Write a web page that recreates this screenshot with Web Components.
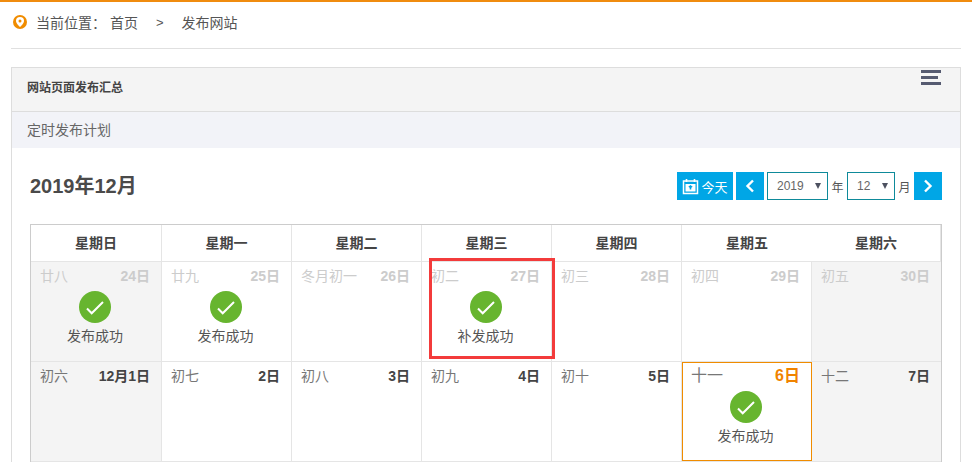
<!DOCTYPE html>
<html lang="zh">
<head>
<meta charset="utf-8">
<title>发布网站</title>
<style>
  html, body { margin: 0; height: 463px; overflow: hidden; background: #fff; }
  body { font: 14px "Liberation Sans", "Noto Sans CJK SC", sans-serif; color: #555; }
</style>
</head>
<body>
<app-page></app-page>

<script>
class BreadCrumb extends HTMLElement {
  connectedCallback() {
    this.attachShadow({ mode: 'open' });
    this.shadowRoot.innerHTML = `
      <style>
        :host { display: flex; align-items: center; height: 40px; margin: 0 11px; border-bottom: 1px solid #e0e0e0; padding: 0 2px 6px; color: #555; }
        svg { width: 14px; height: 16px; margin-right: 9px; }
        .sep { margin: 0 18px; font-size: 13px; }
        .home { margin-left: 4px; }
      </style>
      <svg viewBox="0 0 14 16"><circle cx="7" cy="8" r="7" fill="#f08c00"/><path d="M7 3a4 4 0 0 0-4 4c0 2.600 4 6 4 6s4-3.400 4-6a4 4 0 0 0-4-4z" fill="#fff"/><circle cx="7" cy="7" r="1.500" fill="#f08c00"/></svg>
      <span>当前位置：</span><span class="home">首页</span><span class="sep">&gt;</span><span>发布网站</span>
    `;
  }
}
customElements.define('bread-crumb', BreadCrumb);

class PanelBox extends HTMLElement {
  connectedCallback() {
    this.attachShadow({ mode: 'open' });
    this.shadowRoot.innerHTML = `
      <style>
        :host { display: block; margin: 18px 11px 0 11px; border: 1px solid #ddd; border-bottom: 0; }
        .head { position: relative; box-sizing: border-box; height: 44px; display: flex; align-items: center; padding: 0 0 7px 15px; background: #f4f4f4; border-bottom: 1px solid #ddd; font-size: 12px; font-weight: bold; color: #444; }
        .menu { position: absolute; top: 2px; right: 19px; width: 20px; height: 15px; display: flex; flex-direction: column; justify-content: space-between; }
        .menu i { display: block; height: 3px; background: #555a70; }
        .menu i:nth-child(2) { width: 17px; }
        .sub { height: 36px; box-sizing: border-box; padding: 0 0 2px 15px; display: flex; align-items: center; background: #f2f3f8; color: #666; }
      </style>
      <div class="head">网站页面发布汇总<div class="menu"><i></i><i></i><i></i></div></div>
      <div class="sub">定时发布计划</div>
      <slot></slot>
    `;
  }
}
customElements.define('panel-box', PanelBox);

class MonthSelect extends HTMLElement {
  connectedCallback() {
    this.attachShadow({ mode: 'open' });
    this.shadowRoot.innerHTML = `
      <style>
        :host { display: flex; align-items: center; box-sizing: border-box; height: 28px; border: 1px solid #0e8a9a; padding: 0 6px 0 9px; color: #666; font-size: 12px; justify-content: space-between; }
        i { width: 0; height: 0; border: 3px solid transparent; border-width: 6px 3px 0; border-top-color: #4d5160; }
      </style>
      <span><slot></slot></span><i></i>
    `;
  }
}
customElements.define('month-select', MonthSelect);

class CalToolbar extends HTMLElement {
  connectedCallback() {
    this.attachShadow({ mode: 'open' });
    this.shadowRoot.innerHTML = `
      <style>
        :host { display: flex; align-items: center; justify-content: space-between; height: 28px; }
        h2 { margin: 0 0 3px; font-size: 20px; font-weight: bold; color: #4a4a4a; }
        .tools { display: flex; align-items: center; }
        .btn { display: flex; align-items: center; justify-content: center; height: 28px; background: #00a6e6; color: #fff; font-size: 13px; }
        .today { width: 56px; gap: 2px; }
        .today svg { width: 17px; height: 17px; }
        .nav { width: 28px; }
        .nav svg { width: 10px; height: 14px; }
        .prev { margin: 0 3px; }
        .lbl { font-size: 12px; color: #555; width: 19px; text-align: center; }
        .y { width: 61px; }
        .m { width: 48px; }
      </style>
      <h2>2019年12月</h2>
      <div class="tools">
        <div class="btn today">
          <svg viewBox="0 0 17 17"><path d="M4.500 1v3M12.500 1v3" stroke="#fff" stroke-width="1.600" fill="none"/><rect x="1.500" y="3" width="14" height="12.500" fill="none" stroke="#fff" stroke-width="1.500"/><rect x="3.500" y="6" width="10" height="7.500" fill="#fff"/><path d="M8.500 7l2.200 1.800-1.400 1v1.700h-1.600v-1.700l-1.400-1z" fill="#00a6e6"/></svg>
          <span>今天</span>
        </div>
        <div class="btn nav prev"><svg viewBox="0 0 10 14"><path d="M8 1.500L2.500 7 8 12.500" fill="none" stroke="#fff" stroke-width="2.400"/></svg></div>
        <month-select class="y">2019</month-select>
        <span class="lbl">年</span>
        <month-select class="m">12</month-select>
        <span class="lbl">月</span>
        <div class="btn nav next"><svg viewBox="0 0 10 14"><path d="M2 1.500L7.500 7 2 12.500" fill="none" stroke="#fff" stroke-width="2.400"/></svg></div>
      </div>
    `;
  }
}
customElements.define('cal-toolbar', CalToolbar);

class StatusBadge extends HTMLElement {
  connectedCallback() {
    this.attachShadow({ mode: 'open' });
    this.shadowRoot.innerHTML = `
      <style>
        :host { display: flex; flex-direction: column; align-items: center; color: #555; }
        svg { width: 32px; height: 32px; display: block; margin-bottom: 5px; }
        span { line-height: 17px; }
      </style>
      <svg viewBox="0 0 32 32"><circle cx="16" cy="16" r="16" fill="#67b52f"/><path d="M8 17.500l4.700 4.800L24 11" fill="none" stroke="#fff" stroke-width="2"/></svg>
      <span><slot></slot></span>
    `;
  }
}
customElements.define('status-badge', StatusBadge);

class CalCell extends HTMLElement {
  connectedCallback() {
    const lunar = this.getAttribute('lunar');
    const day = this.getAttribute('day');
    this.attachShadow({ mode: 'open' });
    this.shadowRoot.innerHTML = `
      <style>
        :host { display: block; position: relative; box-sizing: border-box; height: 100px; padding: 4px 11px 0 9px; border-right: 1px solid #e5e5e5; border-bottom: 1px solid #e5e5e5; color: #777; }
        :host([weekend]) { background: #f4f4f4; }
        :host([last]) { border-right: 0; }
        .top { display: flex; justify-content: space-between; height: 20px; line-height: 20px; }
        b { color: #444; }
        :host([old]) .top, :host([old]) b { color: #ccc; }
        status-badge { margin-top: 5px; }
        :host([today]) { z-index: 1; }
        :host([today]) .today-box { position: absolute; inset: 0 -1px 0 0; border: 1px solid #f08c00; pointer-events: none; }
        :host([today]) .top { font-size: 16px; }
        :host([today]) b { color: #f08300; }
        :host([marked]) .mark { position: absolute; left: 7px; top: -4px; width: 126px; height: 101px; box-sizing: border-box; border: 3px solid #f33b3b; z-index: 2; }
      </style>
      <div class="top"><span>${lunar}</span><b>${day}</b></div>
      <slot></slot>
      <div class="today-box"></div>
      <div class="mark"></div>
    `;
    const s = this.getAttribute('status');
    if (s) {
      const b = document.createElement('status-badge');
      b.textContent = s;
      this.shadowRoot.insertBefore(b, this.shadowRoot.querySelector('slot'));
    }
  }
}
customElements.define('cal-cell', CalCell);

class CalGrid extends HTMLElement {
  connectedCallback() {
    const heads = ['星期日', '星期一', '星期二', '星期三', '星期四', '星期五', '星期六'];
    const days = [
      ['廿八', '24日', 'old weekend', '发布成功'],
      ['廿九', '25日', 'old', '发布成功'],
      ['冬月初一', '26日', 'old', ''],
      ['初二', '27日', 'old marked', '补发成功'],
      ['初三', '28日', 'old', ''],
      ['初四', '29日', 'old', ''],
      ['初五', '30日', 'old weekend last', ''],
      ['初六', '12月1日', 'weekend', ''],
      ['初七', '2日', '', ''],
      ['初八', '3日', '', ''],
      ['初九', '4日', '', ''],
      ['初十', '5日', '', ''],
      ['十一', '6日', 'today', '发布成功'],
      ['十二', '7日', 'weekend last', '']
    ];
    const cells = days.map(d => {
      const flags = d[2].split(' ').filter(Boolean).map(f => f + '="1"').join(' ');
      return `<cal-cell lunar="${d[0]}" day="${d[1]}" status="${d[3]}" ${flags}></cal-cell>`;
    }).join('');
    this.attachShadow({ mode: 'open' });
    this.shadowRoot.innerHTML = `
      <style>
        :host { display: grid; grid-template-columns: 131px repeat(5, 130px) 1fr; width: 912px; box-sizing: border-box; margin-top: 24px; border: 1px solid #ccc; border-bottom: 0; }
        .th { height: 36px; display: flex; align-items: center; justify-content: center; font-weight: bold; color: #444; border-right: 1px solid #e5e5e5; border-bottom: 1px solid #e5e5e5; }
        .th span { margin-bottom: 2px; }
        .th:nth-child(7) { border-right: 0; }
      </style>
      ${heads.map(h => `<div class="th"><span>${h}</span></div>`).join('')}
      ${cells}
    `;
  }
}
customElements.define('cal-grid', CalGrid);

class AppPage extends HTMLElement {
  connectedCallback() {
    this.attachShadow({ mode: 'open' });
    this.shadowRoot.innerHTML = `
      <style>
        :host { display: block; border-top: 2px solid #f08c0f; }
        .body { padding: 24px 18px 0; }
      </style>
      <bread-crumb></bread-crumb>
      <panel-box>
        <div class="body">
          <cal-toolbar></cal-toolbar>
          <cal-grid></cal-grid>
        </div>
      </panel-box>
    `;
  }
}
customElements.define('app-page', AppPage);
</script>
</body>
</html>
